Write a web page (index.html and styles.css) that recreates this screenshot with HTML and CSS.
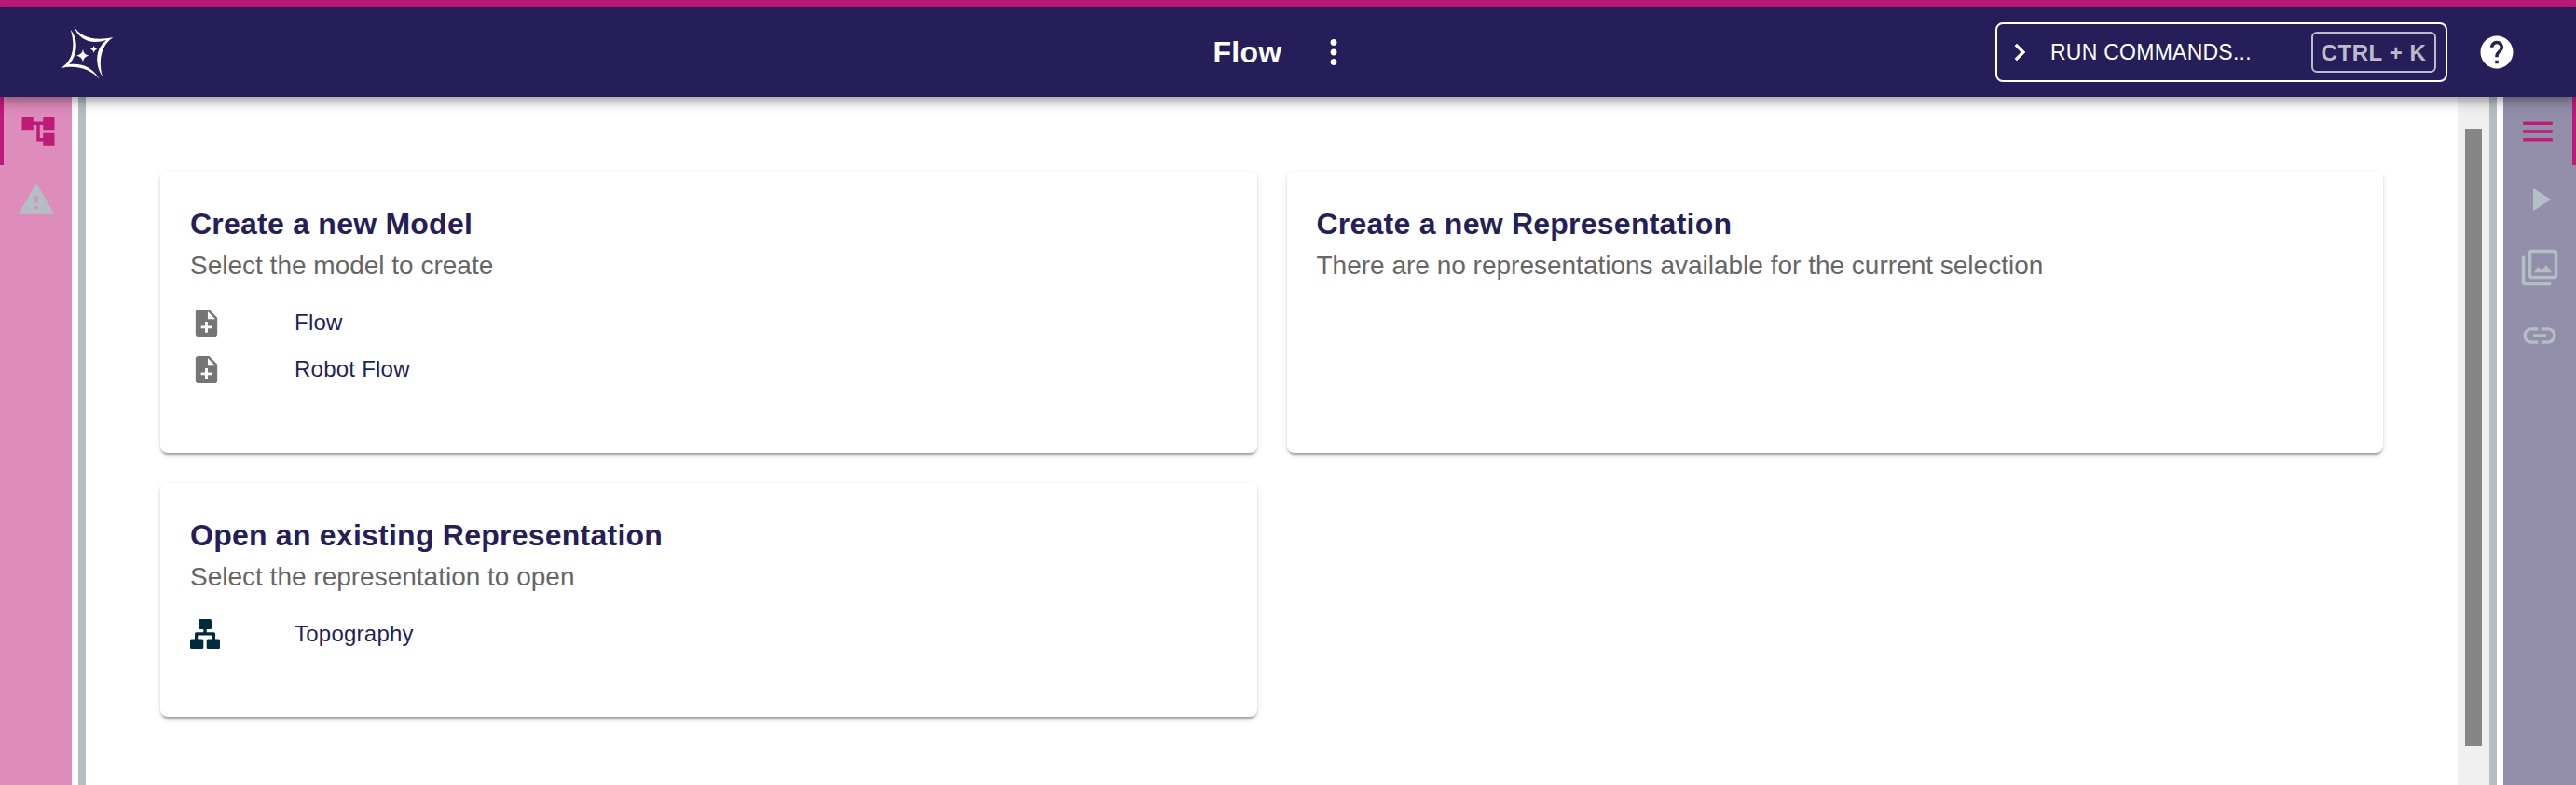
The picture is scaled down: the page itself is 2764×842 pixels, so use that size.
FILE: index.html
```html
<!DOCTYPE html>
<html lang="en">
<head>
<meta charset="utf-8">
<title>Flow</title>
<link rel="stylesheet" href="styles.css">
</head>
<body>
<div class="accent"></div>
<header class="navbar">
  <div class="navbar-left">
    <svg class="logo" viewBox="45 45 180 180" fill="#fff">
      <path d="M91 51C109 84 152 101 217 87C180 112 168 160 183 213C160 180 156 125 196 96C148 111 105 97 91 51Z"/>
      <path d="M80 62C105 92 105 140 76 174C115 169 150 182 173 221C145 191 100 174 48 187C86 163 98 120 80 62Z"/>
      <path d="M120 126Q122 143 139 146Q122 149 120 166Q117 149 99 146Q117 143 120 126Z"/>
      <path d="M155 113Q157 123 167 125Q157 127 155 137Q153 127 143 125Q153 123 155 113Z"/>
    </svg>
  </div>
  <div class="navbar-center">
    <h1 class="project-name">Flow</h1>
    <svg class="icon" viewBox="0 0 24 24"><path d="M12 8c1.1 0 2-.9 2-2s-.9-2-2-2-2 .9-2 2 .9 2 2 2zm0 2c-1.1 0-2 .9-2 2s.9 2 2 2 2-.9 2-2-.9-2-2-2zm0 6c-1.1 0-2 .9-2 2s.9 2 2 2 2-.9 2-2-.9-2-2-2z"/></svg>
  </div>
  <div class="navbar-right">
    <button class="commands">
      <svg class="chevron" viewBox="0 0 24 24"><path d="M10 6 8.59 7.41 13.17 12l-4.58 4.59L10 18l6-6z"/></svg>
      <span class="commands-label">RUN COMMANDS...</span>
      <span class="shortcut">CTRL + K</span>
    </button>
    <svg class="icon" viewBox="0 0 24 24"><path d="M12 2C6.48 2 2 6.48 2 12s4.48 10 10 10 10-4.48 10-10S17.52 2 12 2zm1 17h-2v-2h2v2zm2.07-7.75-.9.92C13.45 12.9 13 13.5 13 15h-2v-.5c0-1.1.45-2.1 1.17-2.83l1.24-1.26c.37-.36.59-.86.59-1.41 0-1.1-.9-2-2-2s-2 .9-2 2H8c0-2.21 1.79-4 4-4s4 1.79 4 4c0 .88-.36 1.68-.93 2.25z"/></svg>
  </div>
</header>
<div class="workbench">
  <nav class="sidebar sidebar-left">
    <div class="tab tab-active"><svg class="icon" viewBox="0 0 24 24"><path d="M22 11V3h-7v3H9V3H2v8h7V8h2v10h4v3h7v-8h-7v3h-2V8h2v3z"/></svg></div>
    <div class="tab"><svg class="icon" viewBox="0 0 24 24"><path d="M1 21h22L12 2 1 21zm12-3h-2v-2h2v2zm0-4h-2v-4h2v4z"/></svg></div>
  </nav>
  <div class="resizer"></div>
  <main class="content">
    <section class="card">
      <h2 class="card-title">Create a new Model</h2>
      <p class="card-subtitle">Select the model to create</p>
      <ul class="list">
        <li class="item"><svg class="file" viewBox="0 0 24 24"><path d="M14 2H6c-1.1 0-1.99.9-1.99 2L4 20c0 1.1.89 2 1.99 2H18c1.1 0 2-.9 2-2V8l-6-6zm2 14h-3v3h-2v-3H8v-2h3v-3h2v3h3v2zm-3-7V3.500L18.500 9H13z"/></svg><span>Flow</span></li>
        <li class="item"><svg class="file" viewBox="0 0 24 24"><path d="M14 2H6c-1.1 0-1.99.9-1.99 2L4 20c0 1.1.89 2 1.99 2H18c1.1 0 2-.9 2-2V8l-6-6zm2 14h-3v3h-2v-3H8v-2h3v-3h2v3h3v2zm-3-7V3.500L18.500 9H13z"/></svg><span>Robot Flow</span></li>
      </ul>
    </section>
    <section class="card">
      <h2 class="card-title">Create a new Representation</h2>
      <p class="card-subtitle">There are no representations available for the current selection</p>
    </section>
    <section class="card">
      <h2 class="card-title">Open an existing Representation</h2>
      <p class="card-subtitle">Select the representation to open</p>
      <ul class="list">
        <li class="item"><svg class="diagram" viewBox="0 0 32 32"><rect x="9" y="0" width="14" height="11" rx="1.500"/><rect x="0" y="21.500" width="14.300" height="10.500" rx="1.500"/><rect x="17.700" y="21.500" width="14.300" height="10.500" rx="1.500"/><path d="M14.300 10h3.400v4.200h7.800q1.500 0 1.500 1.500V22h-3.200v-4.400H8.300V22H5v-6.300q0-1.500 1.500-1.500h7.800z"/></svg><span>Topography</span></li>
      </ul>
    </section>
  </main>
  <div class="scrollbar"><div class="thumb"></div></div>
  <div class="resizer resizer-right"></div>
  <nav class="sidebar sidebar-right">
    <div class="tab tab-active"><svg class="icon" viewBox="0 0 24 24"><path d="M3 18h18v-2H3v2zm0-5h18v-2H3v2zm0-7v2h18V6H3z"/></svg></div>
    <div class="tab"><svg class="icon" viewBox="0 0 24 24"><path d="M8 5v14l11-7z"/></svg></div>
    <div class="tab"><svg class="icon" viewBox="0 0 24 24"><path d="M15.960 10.290l-2.750 3.540-1.960-2.360L8.500 15h11l-3.540-4.710zM3 5H1v16c0 1.100.9 2 2 2h16v-2H3V5zm18-4H7c-1.100 0-2 .9-2 2v14c0 1.100.9 2 2 2h14c1.100 0 2-.9 2-2V3c0-1.100-.9-2-2-2zm0 16H7V3h14v14z"/></svg></div>
    <div class="tab"><svg class="icon" viewBox="0 0 24 24"><path d="M3.900 12c0-1.710 1.390-3.100 3.100-3.100h4V7H7c-2.760 0-5 2.240-5 5s2.240 5 5 5h4v-1.900H7c-1.710 0-3.100-1.390-3.100-3.100zM8 13h8v-2H8v2zm9-6h-4v1.900h4c1.710 0 3.100 1.390 3.100 3.100s-1.390 3.100-3.100 3.100h-4V17h4c2.760 0 5-2.240 5-5s-2.240-5-5-5z"/></svg></div>
  </nav>
</div>
</body>
</html>
```
FILE: styles.css
```css
* { box-sizing: border-box; }
body {
  margin: 0;
  height: 842px;
  overflow: hidden;
  display: flex;
  flex-direction: column;
  background: #fff;
  font-family: "Liberation Sans", Arial, sans-serif;
}
h1, h2, p, ul { margin: 0; padding: 0; }
ul { list-style: none; }
svg { display: block; flex: none; fill: currentColor; }
.icon { width: 42px; height: 42px; }

.accent { height: 8px; flex: none; background: #be1a78; }
.navbar {
  height: 96px;
  flex: none;
  position: relative;
  z-index: 1;
  display: grid;
  grid-template-columns: 1fr auto 1fr;
  align-items: center;
  background: #261e58;
  color: #fff;
  box-shadow: 0 4px 8px -2px rgba(0,0,0,.2), 0 8px 10px rgba(0,0,0,.14), 0 2px 20px rgba(0,0,0,.12);
}
.navbar-left { padding-left: 64px; }
.logo { width: 60px; height: 60px; }
.navbar-center { display: flex; align-items: center; gap: 35px; padding-right: 10px; }
.project-name { font-size: 32px; line-height: 48px; letter-spacing: .24px; }
.navbar-right {
  display: flex;
  justify-content: flex-end;
  align-items: center;
  gap: 32px;
  padding-right: 64px;
}
.commands {
  width: 485px;
  height: 64px;
  display: flex;
  align-items: center;
  padding: 0 10px 0 6px;
  border: 2px solid #fff;
  border-radius: 8px;
  background: none;
  color: inherit;
  font: 24px "Liberation Sans", Arial, sans-serif;
}
.chevron { width: 36px; height: 36px; stroke: currentColor; stroke-width: .4px; }
.commands-label { margin-left: 15px; font-size: 23px; letter-spacing: .25px; }
.shortcut {
  width: 134px;
  height: 44px;
  margin-left: auto;
  border: 2px solid;
  border-radius: 6px;
  line-height: 42px;
  font-weight: 700;
  letter-spacing: .6px;
  color: #bebbcc;
}

.workbench { flex: 1; display: flex; min-height: 0; }
.sidebar { width: 77px; flex: none; color: #b3bfc5; }
.sidebar-left { background: #de8cbb; }
.sidebar-right { width: 78px; background: #938fab; }
.tab { height: 73px; display: flex; align-items: center; justify-content: center; }
.tab-active { color: #be1a78; }
.sidebar-left .tab-active { border-left: 4px solid #be1a78; }
.sidebar-right .tab-active { border-right: 4px solid #be1a78; }
.resizer { width: 8px; flex: none; margin-left: 7px; background: #b3bfc5; }
.resizer-right { margin: 0 7px 0 0; }
.content {
  flex: 1;
  display: grid;
  grid-template-columns: 1fr 1fr;
  grid-template-rows: 302px 251px;
  gap: 32px;
  padding: 80px;
}
.card {
  padding: 32px;
  border-radius: 8px;
  background: #fff;
  box-shadow: 0 4px 2px -2px rgba(0,0,0,.2), 0 2px 2px rgba(0,0,0,.14), 0 2px 6px rgba(0,0,0,.12);
}
.card-title { font-size: 32px; line-height: 48px; letter-spacing: .24px; color: #261e58; }
.card-subtitle { font-size: 28px; line-height: 42px; color: #666; }
.list { padding-top: 15px; }
.item { height: 50px; display: flex; align-items: center; font-size: 24px; letter-spacing: .24px; color: #261e58; }
.item span { margin-left: auto; width: calc(100% - 112px); }
.file { width: 35px; height: 35px; color: #757575; }
.diagram { width: 32px; height: 32px; color: #002b3c; }
.scrollbar { width: 34px; padding: 34px 8px 42px; background: #f0f0f0; }
.thumb { height: 100%; background: #868686; }
```
